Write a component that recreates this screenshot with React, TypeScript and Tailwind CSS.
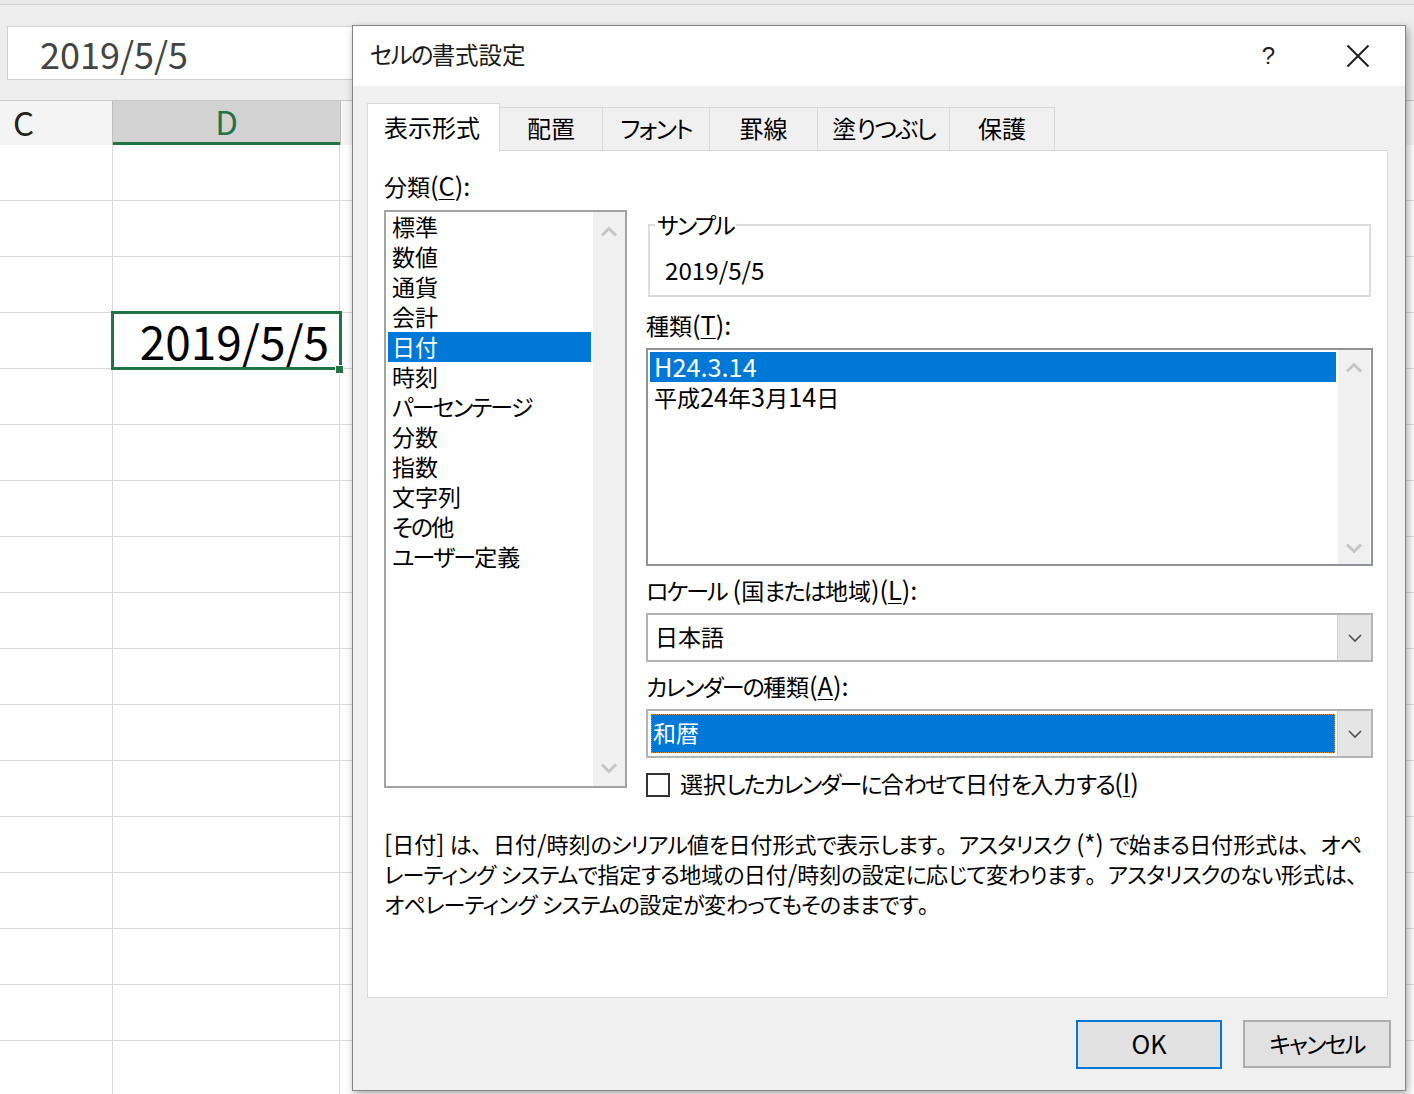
import React from "react";

const jp = "font-['Noto_Sans_CJK_JP','Noto_Sans',sans-serif] [font-feature-settings:'palt']";

const categories = [
  "標準",
  "数値",
  "通貨",
  "会計",
  "日付",
  "時刻",
  "パーセンテージ",
  "分数",
  "指数",
  "文字列",
  "その他",
  "ユーザー定義",
];

const tabs = [
  { label: "表示形式", w: "w-[133px]" },
  { label: "配置", w: "w-[103px]" },
  { label: "フォント", w: "w-[107px]" },
  { label: "罫線", w: "w-[108px]" },
  { label: "塗りつぶし", w: "w-[132px]" },
  { label: "保護", w: "w-[105px]" },
];

// Meiryo UI-ish text: narrower kana, wide punctuation, larger latin
function J({ t, tight = true }: { t: string; tight?: boolean }) {
  const parts = t.match(/[\u3040-\u30ff]+|[、。]|[\x20-\x7e]+|[^\u3040-\u30ff、。\x20-\x7e]+/g) ?? [];
  return (
    <>
      {parts.map((p, i) => {
        if (/^[\u3040-\u30ff]/.test(p))
          return (
            <span key={i} className={tight ? "tracking-[-1.8px]" : "tracking-[-0.8px]"}>
              {p}
            </span>
          );
        if (p === "、" || p === "。")
          return (
            <span key={i} className="[font-feature-settings:normal]">
              {p}
            </span>
          );
        if (/^[\x20-\x7e]/.test(p))
          return (
            <span key={i} className="text-[1.1em]">
              {p}
            </span>
          );
        return <React.Fragment key={i}>{p}</React.Fragment>;
      })}
    </>
  );
}

function ScrollChevron({ dir }: { dir: "up" | "down" }) {
  return (
    <svg width="18" height="11" viewBox="0 0 18 11">
      <polyline
        points={dir === "up" ? "2,9.5 9,2.5 16,9.5" : "2,1.5 9,8.5 16,1.5"}
        fill="none"
        stroke="#c6c6c6"
        strokeWidth="3"
      />
    </svg>
  );
}

function ScrollBar({ className }: { className: string }) {
  return (
    <div className={`bg-[#f0f0f0] flex flex-col items-center justify-between ${className}`}>
      <ScrollChevron dir="up" />
      <ScrollChevron dir="down" />
    </div>
  );
}

function DropButton() {
  return (
    <div className="w-[34px] h-full bg-[#e5e5e5] border-l border-[#d0d0d0] flex items-center justify-center">
      <svg width="16" height="10" viewBox="0 0 16 10">
        <polyline points="2,2 8,8 14,2" fill="none" stroke="#505050" strokeWidth="1.6" />
      </svg>
    </div>
  );
}

function Mn({ c }: { c: string }) {
  return <span className="text-[1.1em] underline underline-offset-[3px] decoration-1">{c}</span>;
}

function Sheet() {
  const rows = Array.from({ length: 17 });
  return (
    <div className="w-[1414px] h-[1094px] bg-white flex flex-col font-['Noto_Sans_CJK_JP','Noto_Sans',sans-serif]">
      {/* formula bar */}
      <div className="h-[5px] bg-[#e9e9e9] border-b border-[#d2d2d2]" />
      <div className="h-[95px] bg-[#eeeeee] pt-[21px] pl-[7px]">
        <div className="w-[346px] h-[54px] bg-white border border-[#cfcfcf] flex items-center pl-[32px] text-[36px] text-[#444444]">
          2019/5/5
        </div>
      </div>
      {/* column headers */}
      <div className="h-[45px] flex border-t border-[#c8c8c8] bg-[#f4f4f4]">
        <div className="w-[113px] flex items-center pl-[13px] text-[33px] text-[#222222] border-r border-[#bdbdbd]">C</div>
        <div className="w-[227px] flex items-center justify-center text-[33px] text-[#217346] bg-[#d2d2d2] border-b-[3px] border-[#217346]">
          D
        </div>
        <div className="flex-1 border-l border-[#bdbdbd]" />
      </div>
      {/* grid */}
      <div className="flex-1 overflow-hidden">
        {rows.map((_, i) => (
          <div key={i} className="h-[56px] flex border-b border-[#dadada]">
            <div className="w-[113px] border-r border-[#dadada]" />
            <div
              className={`relative w-[227px] border-r border-[#dadada] flex items-center justify-end pr-[10px] text-[46px] text-black ${
                i === 3 ? "outline-[3px] outline-[#217346] -outline-offset-1 z-10" : ""
              }`}
            >
              {i === 3 && (
                <>
                  2019/5/5
                  <span className="absolute -right-[5px] -bottom-[6px] w-[9px] h-[9px] bg-[#217346] border border-white" />
                </>
              )}
            </div>
            <div className="flex-1" />
          </div>
        ))}
      </div>
    </div>
  );
}

function Dialog() {
  return (
    <div
      className={`absolute left-[352px] top-[25px] w-[1054px] h-[1066px] border border-[#858585] shadow-[2px_3px_8px_rgba(0,0,0,0.35)] bg-[#f0f0f0] flex flex-col text-black ${jp}`}
    >
      {/* title bar */}
      <div className="h-[60px] bg-white flex items-center pl-[17px] pr-[35px]">
        <div className="text-[23.5px] text-[#1a1a1a] flex-1 pb-[3px]">
          <J t="セルの書式設定" />
        </div>
        <div className="text-[24px] text-[#222222] mr-[71px] font-['Liberation_Sans',sans-serif]">?</div>
        <svg width="24" height="24" viewBox="0 0 24 24">
          <path d="M1.5 1.5 L22.5 22.5 M22.5 1.5 L1.5 22.5" stroke="#1f1f1f" strokeWidth="2" fill="none" />
        </svg>
      </div>

      {/* body */}
      <div className="flex-1 flex flex-col pt-[17px]">
        {/* tabs */}
        <div className="flex items-end pl-[14px] relative z-10 -mb-px">
          {tabs.map((t, i) =>
            i === 0 ? (
              <div
                key={t.label}
                className={`${t.w} h-[48px] bg-white border-x border-t border-[#d9d9d9] flex items-center justify-center text-[24px] pr-[3px] pb-[2px]`}
              >
                <J t={t.label} />
              </div>
            ) : (
              <div
                key={t.label}
                className={`${t.w} h-[44px] bg-[#f0f0f0] border border-l-0 border-[#d9d9d9] flex items-center justify-center text-[24px] pb-[2px]`}
              >
                <J t={t.label} />
              </div>
            )
          )}
        </div>

        {/* panel */}
        <div className="ml-[14px] mr-[17px] h-[848px] bg-white border border-[#d9d9d9] pt-[21px] pl-[16px] pr-[14px]">
          <div className="h-[30px] leading-[26px] text-[23px]">
            分類<J t="(" />
            <Mn c="C" />
            <J t="):" />
          </div>
          <div className="mt-[8px] flex gap-[19px]">
            {/* category list */}
            <div className="w-[243px] h-[578px] border-2 border-[#a3a3a3] bg-white flex">
              <div className="flex-1 px-[2px]">
                {categories.map((c) => (
                  <div
                    key={c}
                    className={`h-[30px] leading-[29px] pl-[4px] text-[23px] ${
                      c === "日付" ? "bg-[#0078d7] text-white" : ""
                    }`}
                  >
                    <J t={c} />
                  </div>
                ))}
              </div>
              <ScrollBar className="w-[32px] pt-[14px] pb-[12px]" />
            </div>

            {/* right column */}
            <div className="flex-1 flex flex-col">
              <fieldset className="h-[87px] border-2 border-[#dcdcdc] pl-[5px] mx-[2px]">
                <legend className="px-[2px] h-[30px] leading-[28px] text-[23px]">
                  <J t="サンプル" />
                </legend>
                <div className="ml-[10px] mt-[15px] h-[30px] leading-[30px] text-[22px]">
                  <J t="2019/5/5" />
                </div>
              </fieldset>

              <div className="mt-[14px] h-[30px] leading-[26px] text-[23px]">
                種類<J t="(" />
                <Mn c="T" />
                <J t="):" />
              </div>
              <div className="mt-[7px] h-[218px] border-2 border-[#8f9399] bg-white flex">
                <div className="flex-1 pt-[2px] pl-[2px]">
                  <div className="h-[30px] leading-[29px] pl-[4px] text-[23px] bg-[#0078d7] text-white">
                    <J t="H24.3.14" />
                  </div>
                  <div className="h-[30px] leading-[29px] pl-[4px] text-[23px]">
                    <J t="平成24年3月14日" />
                  </div>
                </div>
                <ScrollBar className="w-[32px] ml-[2px] mr-[1px] pt-[12px] pb-[10px]" />
              </div>

              <div className="mt-[10px] h-[30px] leading-[26px] text-[23px]">
                <J t="ロケール (国または地域)(" />
                <Mn c="L" />
                <J t="):" />
              </div>
              <div className="mt-[7px] h-[49px] border-2 border-[#b4b4b4] bg-white flex items-stretch">
                <div className="flex-1 flex items-center pl-[7px] pb-[2px] text-[23px]">日本語</div>
                <DropButton />
              </div>

              <div className="mt-[10px] h-[30px] leading-[26px] text-[23px]">
                <J t="カレンダーの種類(" />
                <Mn c="A" />
                <J t="):" />
              </div>
              <div className="mt-[7px] h-[49px] border-2 border-[#b4b4b4] bg-white flex items-stretch">
                <div className="flex-1 p-[3px] pr-[2px]">
                  <div className="h-full bg-[#0078d7] outline-1 outline-dotted outline-[#d08a3c] -outline-offset-1 flex items-center pl-[2px] pb-[2px] text-[23px] text-white">
                    和暦
                  </div>
                </div>
                <DropButton />
              </div>

              <div className="mt-[12px] h-[30px] flex items-center">
                <div className="w-[24px] h-[24px] border-2 border-[#333333] bg-white" />
                <div className="ml-[10px] text-[23px] leading-[30px] pb-[5px]">
                  <J t="選択したカレンダーに合わせて日付を入力する(" />
                  <Mn c="I" />
                  <J t=")" />
                </div>
              </div>
            </div>
          </div>

          {/* description */}
          <div className="mt-[28px] text-[22px] leading-[30px] whitespace-nowrap">
            <div>
              <J tight={false} t="[日付] は、日付/時刻のシリアル値を日付形式で表示します。アスタリスク (*) で始まる日付形式は、オペ" />
            </div>
            <div>
              <J tight={false} t="レーティング システムで指定する地域の日付/時刻の設定に応じて変わります。アスタリスクのない形式は、" />
            </div>
            <div>
              <J tight={false} t="オペレーティング システムの設定が変わってもそのままです。" />
            </div>
          </div>
        </div>

        {/* buttons */}
        <div className="flex justify-end gap-[21px] mt-[22px] pr-[14px]">
          <div className="w-[146px] h-[49px] bg-[#e1e1e1] border-2 border-[#0078d7] flex items-center justify-center text-[23px] pb-[2px]">
            <J t="OK" />
          </div>
          <div className="w-[148px] h-[48px] bg-[#e1e1e1] border-2 border-[#adadad] flex items-center justify-center text-[23px] pb-[2px]">
            <J t="キャンセル" />
          </div>
        </div>
      </div>
    </div>
  );
}

export default function App() {
  return (
    <div className="relative w-[1414px] h-[1094px] overflow-hidden">
      <Sheet />
      <Dialog />
    </div>
  );
}
